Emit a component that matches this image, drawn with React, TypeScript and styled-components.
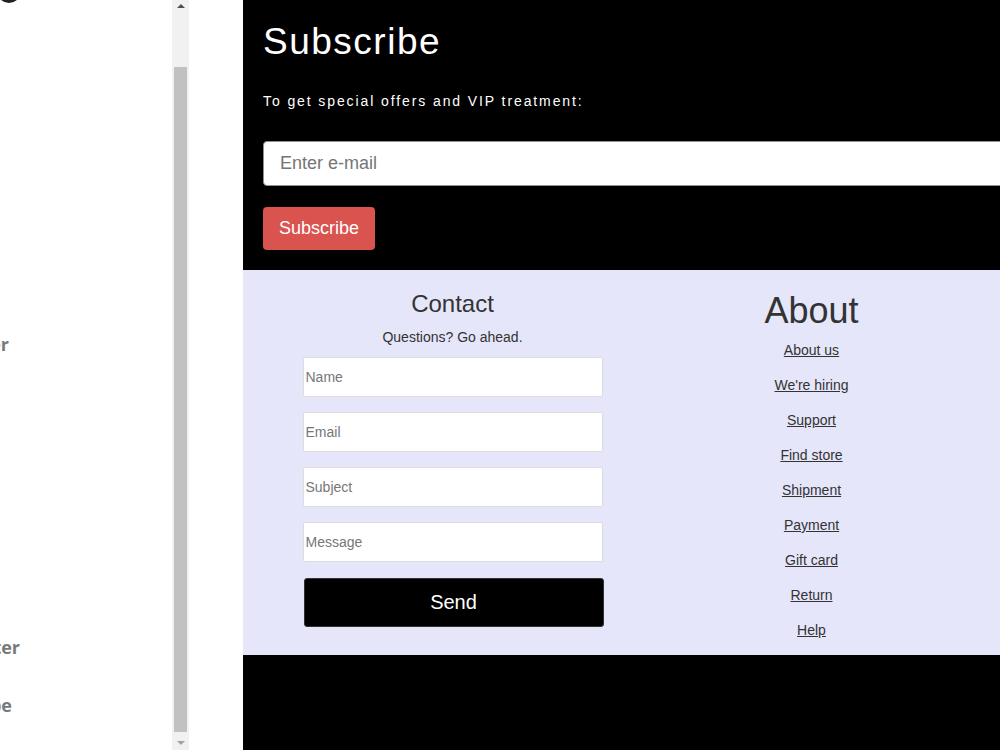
import React from 'react';
import styled, { createGlobalStyle } from 'styled-components';

const GlobalStyle = createGlobalStyle`
  html, body {
    margin: 0;
    padding: 0;
    overflow: hidden;
    background: #fff;
    font-family: "Liberation Sans", Arial, sans-serif;
  }
  * {
    box-sizing: border-box;
  }
`;

const Page = styled.div`
  display: flex;
  width: 100vw;
  height: 100vh;
  overflow: hidden;
  background: #fff;
`;

const Sidebar = styled.aside`
  display: flex;
  width: 189px;
  flex-shrink: 0;
  height: 100%;
`;

// the side menu is scrolled sideways, so only the word endings show
const SideContent = styled.div`
  flex: 1;
  display: flex;
  flex-direction: column;
  overflow: hidden;
`;

const LogoDot = styled.div`
  width: 24px;
  height: 24px;
  border-radius: 50%;
  background: #222;
  margin: -21px 0 0 -3px;
  flex-shrink: 0;
`;

const SideItem = styled.a<{ $end: number; $gap: number }>`
  display: flex;
  justify-content: flex-end;
  width: ${(p) => p.$end}px;
  margin-top: ${(p) => p.$gap}px;
  white-space: nowrap;
  font-family: "Open Sans", "Liberation Sans", sans-serif;
  font-weight: 700;
  font-size: 18px;
  line-height: 24px;
  color: #7a7a7a;
  flex-shrink: 0;
`;

const ScrollTrack = styled.div`
  width: 17px;
  height: 100%;
  background: #f1f1f1;
  display: flex;
  flex-direction: column;
`;

const ScrollArrow = styled.div<{ $down?: boolean }>`
  height: 17px;
  display: flex;
  align-items: center;
  justify-content: center;

  &::before {
    content: '';
    width: 0;
    height: 0;
    border-left: 4px solid transparent;
    border-right: 4px solid transparent;
    ${(p) =>
      p.$down
        ? 'border-top: 4px solid #a3a3a3;'
        : 'border-bottom: 4px solid #505050;'}
    margin-top: ${(p) => (p.$down ? '2px' : '-5px')};
  }
`;

const ScrollThumb = styled.div`
  flex: 1;
  margin: 50px 2px 1px 2px;
  background: #c1c1c1;
`;

const Gutter = styled.div`
  width: 54px;
  flex-shrink: 0;
`;

const Main = styled.main`
  width: 1000px;
  flex-shrink: 0;
  height: 100%;
  background: #000;
  display: flex;
  flex-direction: column;
`;

const SubscribeSection = styled.section`
  padding: 21px 20px 20px;
  color: #fff;
`;

const SubscribeTitle = styled.h1`
  margin: 0;
  font-size: 37px;
  font-weight: 400;
  letter-spacing: 1.5px;
  line-height: normal;
`;

const SubscribeText = styled.p`
  margin: 30px 0 32px;
  font-size: 14px;
  letter-spacing: 1.9px;
  line-height: normal;
`;

const EmailInput = styled.input`
  display: block;
  width: 100%;
  height: 45px;
  padding: 0 16px;
  font-family: inherit;
  font-size: 18px;
  border: 1px solid #8f8f8f;
  border-radius: 4px;
  background: #fff;
  outline: none;

  &::placeholder {
    color: #757575;
  }
`;

const RedButton = styled.button`
  margin-top: 21px;
  padding: 0 16px;
  height: 43px;
  border: none;
  border-radius: 4px;
  background: #d9534f;
  color: #fff;
  font-family: inherit;
  font-size: 18px;
`;

const Footer = styled.footer`
  background: #e6e6fa;
  display: grid;
  grid-template-columns: 359px 359px;
  padding: 20px 30px 17px;
  color: #333;
`;

const Column = styled.div`
  display: flex;
  flex-direction: column;
  align-items: center;
`;

const ColumnTitle = styled.h2<{ $size: number }>`
  margin: 0;
  font-size: ${(p) => p.$size}px;
  font-weight: 400;
  line-height: normal;
`;

const Lead = styled.p`
  margin: 11px 0 12px;
  font-size: 14px;
  line-height: normal;
`;

const Field = styled.input`
  width: 300px;
  height: 40px;
  margin-bottom: 15px;
  padding: 0 2px;
  border: 1px solid #ddd;
  border-radius: 2px;
  background: #fff;
  font-family: inherit;
  font-size: 14px;
  outline: none;

  &::placeholder {
    color: #777;
  }
`;

const SendButton = styled.button`
  width: 300px;
  height: 49px;
  margin: 1px 0 0 2px;
  background: #000;
  color: #fff;
  border: 1px solid #333;
  border-radius: 3px;
  font-family: inherit;
  font-size: 20px;
`;

const LinkList = styled.nav`
  margin-top: 10px;
  display: flex;
  flex-direction: column;
  align-items: center;
  gap: 19px;
`;

const FooterLink = styled.a`
  font-size: 14px;
  line-height: 16px;
  color: #333;
  text-decoration: underline;
`;

const BottomBar = styled.div`
  flex: 1;
  background: #000;
`;

const aboutLinks = [
  'About us',
  "We're hiring",
  'Support',
  'Find store',
  'Shipment',
  'Payment',
  'Gift card',
  'Return',
  'Help',
];

const contactFields = ['Name', 'Email', 'Subject', 'Message'];

const App = () => {
  return (
    <Page>
      <GlobalStyle />
      <Sidebar>
        <SideContent>
          <LogoDot />
          <SideItem $end={9} $gap={329}>Partner</SideItem>
          <SideItem $end={20} $gap={279}>Newsletter</SideItem>
          <SideItem $end={12} $gap={34}>Subscribe</SideItem>
        </SideContent>
        <ScrollTrack>
          <ScrollArrow />
          <ScrollThumb />
          <ScrollArrow $down />
        </ScrollTrack>
      </Sidebar>
      <Gutter />
      <Main>
        <SubscribeSection>
          <SubscribeTitle>Subscribe</SubscribeTitle>
          <SubscribeText>To get special offers and VIP treatment:</SubscribeText>
          <EmailInput type="text" placeholder="Enter e-mail" />
          <RedButton>Subscribe</RedButton>
        </SubscribeSection>
        <Footer>
          <Column>
            <ColumnTitle $size={24}>Contact</ColumnTitle>
            <Lead>Questions? Go ahead.</Lead>
            {contactFields.map((f) => (
              <Field key={f} type="text" placeholder={f} />
            ))}
            <SendButton>Send</SendButton>
          </Column>
          <Column>
            <ColumnTitle $size={36}>About</ColumnTitle>
            <LinkList>
              {aboutLinks.map((l) => (
                <FooterLink key={l} href="#">
                  {l}
                </FooterLink>
              ))}
            </LinkList>
          </Column>
        </Footer>
        <BottomBar />
      </Main>
    </Page>
  );
};

export default App;
